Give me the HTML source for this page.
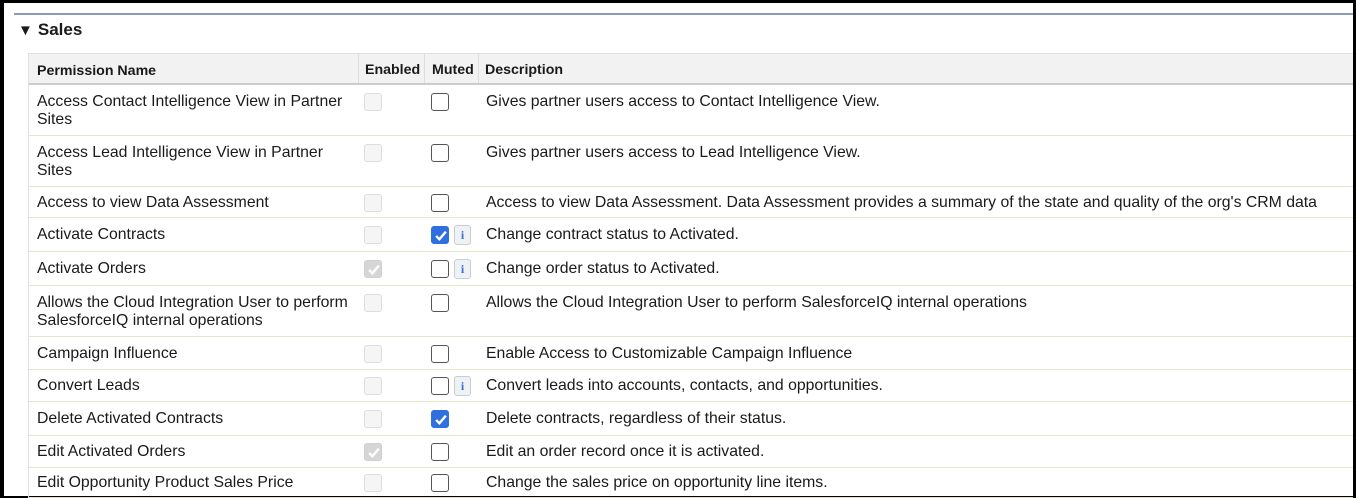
<!DOCTYPE html>
<html><head><style>
*{margin:0;padding:0;box-sizing:border-box}
body{width:1356px;height:498px;background:#000;position:relative;overflow:hidden;font-family:"Liberation Sans",Arial,sans-serif;font-size:15.8px;color:#1a1a1a}
#w{position:absolute;left:4px;top:3px;width:1349px;height:493px;background:#fff}
#bl{position:absolute;left:14px;top:13px;width:1339px;height:2px;background:#8a9cbc}
#h{position:absolute;left:18px;top:20px;font-weight:bold;font-size:17px}
#h span{font-size:15px;margin-right:5px}
#t{position:absolute;left:28px;top:53px;width:1325px;border-left:1px solid #e0e0e0}
.r{position:relative;border-bottom:1px solid #e8e4c8}
.hd{height:32px;background:#f2f2f2;border-top:1px solid #e0e0e0;border-bottom:2px solid #ccc;font-weight:bold;font-size:14.2px}
.c{position:absolute;top:0}
.n{left:8px;width:318px;line-height:18px}
.d{left:457px;white-space:nowrap}
.hd .c{top:8px}
.hd .sep{position:absolute;top:0;bottom:0;width:1px;background:#ddd}
.cb{position:absolute;width:18px;height:18px;border-radius:3px}
.dis{border:1px solid #ddd;background:#f5f5f5}
.on{border:1.5px solid #555;background:#fff}
.chk{background:#2f6fe0;border:1px solid #2f6fe0}
.gchk{background:#d6d6d6;border:1px solid #d0d0d0}
.cb svg{position:absolute;left:2px;top:2px}
.inf{position:absolute;width:17px;height:20px;border:1px solid #ccc;border-radius:3px;background:#eef1f6;color:#3b6fd0;font:bold 12px "Liberation Serif",serif;text-align:center;line-height:19px}
</style></head><body>
<div id="w"></div><div id="bl"></div>
<div id="h"><span>▼</span>Sales</div>
<div id="t">
<div class="r hd"><div class="c n">Permission Name</div><div class="sep" style="left:329px"></div><div class="c" style="left:336px">Enabled</div><div class="sep" style="left:395px"></div><div class="c" style="left:403px">Muted</div><div class="sep" style="left:449px"></div><div class="c" style="left:456px">Description</div></div>
</div>
<script>
var rows=[
["Access Contact Intelligence View in Partner Sites",51,0,0,0,"Gives partner users access to Contact Intelligence View."],
["Access Lead Intelligence View in Partner Sites",51,0,0,0,"Gives partner users access to Lead Intelligence View."],
["Access to view Data Assessment",31,0,0,0,"Access to view Data Assessment. Data Assessment provides a summary of the state and quality of the org's CRM data"],
["Activate Contracts",34,0,1,1,"Change contract status to Activated."],
["Activate Orders",34,1,0,1,"Change order status to Activated."],
["Allows the Cloud Integration User to perform SalesforceIQ internal operations",51,0,0,0,"Allows the Cloud Integration User to perform SalesforceIQ internal operations"],
["Campaign Influence",33,0,0,0,"Enable Access to Customizable Campaign Influence"],
["Convert Leads",32,0,0,1,"Convert leads into accounts, contacts, and opportunities."],
["Delete Activated Contracts",34,0,1,0,"Delete contracts, regardless of their status."],
["Edit Activated Orders",32,1,0,0,"Edit an order record once it is activated."],
["Edit Opportunity Product Sales Price",30,0,0,0,"Change the sales price on opportunity line items."]];
var ck='<svg width="14" height="14" viewBox="0 0 13 13"><path d="M2 6.5l3 3 6-7" stroke="#fff" stroke-width="2.2" fill="none"/></svg>';
var h='';
rows.forEach(function(r){var H=r[1],y=(H>40?8:Math.round((H-18)/2)),ty=(H>40?8:Math.round((H-18)/2));
h+='<div class="r" style="height:'+H+'px"><div class="c n" style="top:'+ty+'px">'+r[0]+'</div>';
h+='<div class="cb '+(r[2]?'gchk':'dis')+'" style="left:335px;top:'+y+'px">'+(r[2]?ck:'')+'</div>';
h+='<div class="cb '+(r[3]?'chk':'on')+'" style="left:402px;top:'+y+'px">'+(r[3]?ck:'')+'</div>';
if(r[4])h+='<div class="inf" style="left:425px;top:'+(y-1)+'px">i</div>';
h+='<div class="c d" style="top:'+ty+'px;line-height:18px">'+r[5]+'</div></div>';});
document.getElementById('t').insertAdjacentHTML('beforeend',h);
</script>
</body></html>
